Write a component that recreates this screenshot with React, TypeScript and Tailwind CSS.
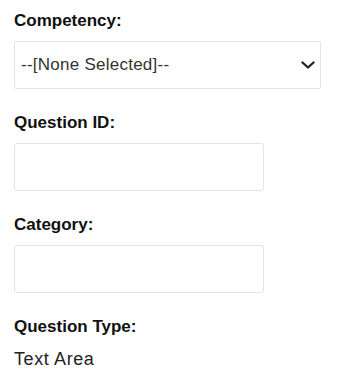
import React from "react";

const font = { fontFamily: '"Liberation Sans", Arial, sans-serif' };

function Label({ children }: { children: React.ReactNode }) {
  return (
    <div className="text-[17px] leading-[24px] font-bold text-[#111]">{children}</div>
  );
}

export default function App() {
  return (
    <div className="bg-white w-[344px] h-[385px] px-[14px] pt-[9px]" style={font}>
      <Label>Competency:</Label>
      <div className="mt-[8px] h-[48px] w-[307px] border border-[#e3e3e3] rounded-[2px] flex items-center justify-between pl-[6px] pr-[5px]">
        <span className="text-[17px] tracking-[0.25px] text-[#333]">--[None Selected]--</span>
        <svg width="14" height="9" viewBox="0 0 14 9">
          <polyline points="1.5,1.5 7,6.5 12.5,1.5" fill="none" stroke="#222" strokeWidth="2.3" strokeLinecap="round" strokeLinejoin="round" />
        </svg>
      </div>
      <div className="mt-[22px]">
        <Label>Question ID:</Label>
      </div>
      <div className="mt-[8px] h-[48px] w-[250px] border border-[#e3e3e3] rounded-[3px]"></div>
      <div className="mt-[22px]">
        <Label>Category:</Label>
      </div>
      <div className="mt-[8px] h-[48px] w-[250px] border border-[#e3e3e3] rounded-[3px]"></div>
      <div className="mt-[22px]">
        <Label>Question Type:</Label>
      </div>
      <div className="mt-[8px] text-[18px] leading-[24px] tracking-[0.6px] text-[#222]">Text Area</div>
    </div>
  );
}
